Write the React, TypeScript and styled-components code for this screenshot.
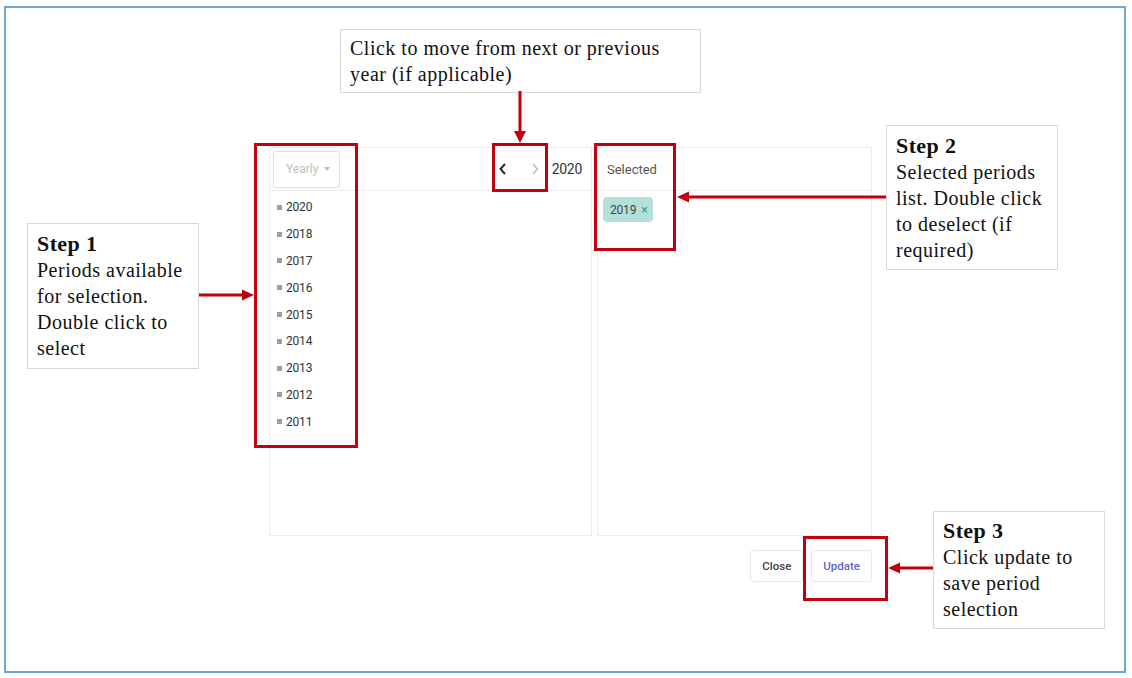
import React from "react";
import styled, { createGlobalStyle } from "styled-components";

const GlobalStyle = createGlobalStyle`
  html, body {
    margin: 0;
    padding: 0;
    background: #ffffff;
  }
  * {
    box-sizing: border-box;
  }
`;

const RED = "#c0000c";

const Frame = styled.div`
  position: relative;
  margin: 6px 0 0 4px;
  width: 1122px;
  height: 667px;
  border: 2px solid #6fa6da;
  padding: 139px 0 0 263px;
  font-family: Roboto, "Liberation Sans", sans-serif;
`;

const Dialog = styled.div`
  display: flex;
  flex-direction: column;
  width: 603px;
`;

const Panels = styled.div`
  display: flex;
  gap: 5px;
  height: 389px;
`;

const Panel = styled.div<{ $width: number }>`
  display: flex;
  flex-direction: column;
  width: ${(p) => p.$width}px;
  border: 1px solid #ececec;
`;

const PanelHeader = styled.div<{ $pad?: string }>`
  display: flex;
  align-items: center;
  height: 43px;
  flex-shrink: 0;
  padding: ${(p) => p.$pad || "0 9px 0 3px"};
  border-bottom: 1px solid #ececec;
`;

const PeriodSelect = styled.div`
  display: flex;
  align-items: center;
  gap: 6px;
  width: 67px;
  height: 37px;
  padding-left: 12px;
  border: 1px solid #e0e0e0;
  border-radius: 3px;
  color: #bdbdbd;
  font-size: 12px;
`;

const Caret = styled.span`
  width: 0;
  height: 0;
  border-left: 3.5px solid transparent;
  border-right: 3.5px solid transparent;
  border-top: 4px solid #bdbdbd;
`;

const Spacer = styled.div`
  flex: 1;
`;

const NavButton = styled.div`
  display: flex;
  align-items: center;
  justify-content: center;
  width: 32px;
  height: 32px;
`;

const YearLabel = styled.span`
  margin-left: 1px;
  font-size: 14px;
  letter-spacing: -0.3px;
  color: #333;
`;

const HeaderTitle = styled.span`
  font-size: 13px;
  color: #555;
`;

const YearList = styled.ul`
  list-style: none;
  margin: 0;
  padding: 3px 0 0 7px;
`;

const YearItem = styled.li`
  display: flex;
  align-items: center;
  height: 26.8px;
  font-size: 12px;
  letter-spacing: -0.2px;
  color: #333;
`;

const Bullet = styled.span`
  width: 5px;
  height: 5px;
  margin-right: 4px;
  background: #9e9e9e;
`;

const SelectedList = styled.div`
  display: flex;
  flex-wrap: wrap;
  padding: 6px 5px;
`;

const Chip = styled.span`
  display: inline-flex;
  align-items: center;
  gap: 5px;
  height: 25px;
  padding: 0 6px 0 7px;
  border-radius: 4px;
  background: #b4e0db;
  color: #444;
  font-size: 12px;
  letter-spacing: -0.2px;
`;

const ChipClose = styled.span`
  color: #2b9a8d;
  font-size: 12px;
`;

const Actions = styled.div`
  display: flex;
  justify-content: flex-end;
  gap: 8px;
  margin-top: 14px;
`;

const Button = styled.button<{ $primary?: boolean }>`
  height: 32px;
  padding: 0 11px;
  border: 1px solid #e8e8e8;
  border-radius: 3px;
  background: #fff;
  font-family: Roboto, "Liberation Sans", sans-serif;
  font-size: 11.5px;
  font-weight: 500;
  color: ${(p) => (p.$primary ? "#5c66c4" : "#424242")};
`;

/* annotation layer: callouts, highlight boxes and arrows placed on the picture */

const Callout = styled.div<{ $x: number; $y: number; $w: number; $pad: string }>`
  position: absolute;
  left: ${(p) => p.$x}px;
  top: ${(p) => p.$y}px;
  width: ${(p) => p.$w}px;
  padding: ${(p) => p.$pad};
  background: #fff;
  border: 1px solid #d9d9d9;
  font-family: "Liberation Serif", "Times New Roman", serif;
  font-size: 20px;
  line-height: 26px;
  letter-spacing: 0.5px;
  color: #111;
`;

const StepTitle = styled.div`
  font-size: 22px;
  font-weight: bold;
  letter-spacing: 0.4px;
`;

const Highlight = styled.div<{ $x: number; $y: number; $w: number; $h: number }>`
  position: absolute;
  left: ${(p) => p.$x}px;
  top: ${(p) => p.$y}px;
  width: ${(p) => p.$w}px;
  height: ${(p) => p.$h}px;
  border: 3px solid ${RED};
`;

const ArrowSvg = styled.svg<{ $x: number; $y: number }>`
  position: absolute;
  left: ${(p) => p.$x}px;
  top: ${(p) => p.$y}px;
  overflow: visible;
`;

type Dir = "left" | "right" | "down";

const Arrow = ({ x, y, length, dir }: { x: number; y: number; length: number; dir: Dir }) => {
  const head = 12;
  if (dir === "down") {
    return (
      <ArrowSvg $x={x} $y={y} width={14} height={length}>
        <line x1={7} y1={0} x2={7} y2={length - head + 2} stroke={RED} strokeWidth={3} />
        <polygon points={`1,${length - head} 13,${length - head} 7,${length}`} fill={RED} />
      </ArrowSvg>
    );
  }
  if (dir === "right") {
    return (
      <ArrowSvg $x={x} $y={y} width={length} height={12}>
        <line x1={0} y1={6} x2={length - head + 2} y2={6} stroke={RED} strokeWidth={3} />
        <polygon points={`${length - head},0.5 ${length - head},11.5 ${length},6`} fill={RED} />
      </ArrowSvg>
    );
  }
  return (
    <ArrowSvg $x={x} $y={y} width={length} height={12}>
      <line x1={head - 2} y1={6} x2={length} y2={6} stroke={RED} strokeWidth={3} />
      <polygon points={`0,6 ${head},0.5 ${head},11.5`} fill={RED} />
    </ArrowSvg>
  );
};

const Chevron = ({ left, color, width }: { left?: boolean; color: string; width: number }) => (
  <svg width={8} height={12} viewBox="0 0 8 12">
    <polyline
      points={left ? "6,1 1.5,6 6,11" : "2,1 6.5,6 2,11"}
      fill="none"
      stroke={color}
      strokeWidth={width}
    />
  </svg>
);

const years = ["2020", "2018", "2017", "2016", "2015", "2014", "2013", "2012", "2011"];

export default function App() {
  return (
    <>
      <GlobalStyle />
      <Frame>
        <Dialog>
          <Panels>
            <Panel $width={323}>
              <PanelHeader>
                <PeriodSelect>
                  Yearly
                  <Caret />
                </PeriodSelect>
                <Spacer />
                <NavButton>
                  <Chevron left color="#2b2b2b" width={2} />
                </NavButton>
                <NavButton>
                  <Chevron color="#b8b8b8" width={1.4} />
                </NavButton>
                <YearLabel>2020</YearLabel>
              </PanelHeader>
              <YearList>
                {years.map((y) => (
                  <YearItem key={y}>
                    <Bullet />
                    {y}
                  </YearItem>
                ))}
              </YearList>
            </Panel>
            <Panel $width={275}>
              <PanelHeader $pad="0 9px">
                <HeaderTitle>Selected</HeaderTitle>
              </PanelHeader>
              <SelectedList>
                <Chip>
                  2019
                  <ChipClose>×</ChipClose>
                </Chip>
              </SelectedList>
            </Panel>
          </Panels>
          <Actions>
            <Button>Close</Button>
            <Button $primary>Update</Button>
          </Actions>
        </Dialog>

        <Callout $x={334} $y={21} $w={361} $pad="5px 9px">
          Click to move from next or previous
          <br />
          year (if applicable)
        </Callout>
        <Callout $x={21} $y={215} $w={172} $pad="7px 9px">
          <StepTitle>Step 1</StepTitle>
          Periods available
          <br />
          for selection.
          <br />
          Double click to
          <br />
          select
        </Callout>
        <Callout $x={880} $y={117} $w={172} $pad="7px 9px 6px">
          <StepTitle>Step 2</StepTitle>
          Selected periods
          <br />
          list. Double click
          <br />
          to deselect (if
          <br />
          required)
        </Callout>
        <Callout $x={927} $y={503} $w={172} $pad="6px 9px">
          <StepTitle>Step 3</StepTitle>
          Click update to
          <br />
          save period
          <br />
          selection
        </Callout>

        <Highlight $x={248} $y={135} $w={104} $h={305} />
        <Highlight $x={486} $y={135} $w={56} $h={49} />
        <Highlight $x={588} $y={135} $w={82} $h={108} />
        <Highlight $x={797} $y={528} $w={85} $h={65} />

        <Arrow dir="down" x={507} y={83} length={52} />
        <Arrow dir="right" x={193} y={281} length={55} />
        <Arrow dir="left" x={671} y={183} length={209} />
        <Arrow dir="left" x={882} y={554} length={45} />
      </Frame>
    </>
  );
}
